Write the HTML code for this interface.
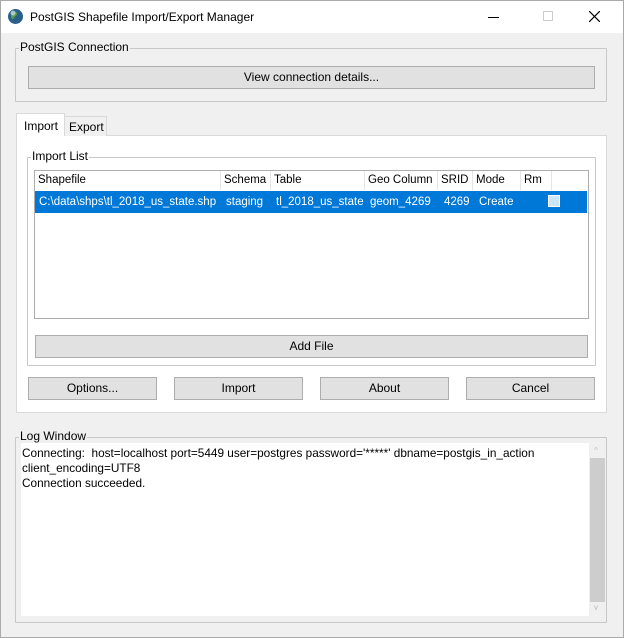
<!DOCTYPE html>
<html><head><style>
*{box-sizing:border-box;margin:0;padding:0}
body{width:624px;height:638px;background:#f0f0f0;font-family:"Liberation Sans",sans-serif;font-size:12px;color:#000;position:relative;overflow:hidden}
.a{position:absolute}
.win{left:0;top:0;width:624px;height:638px;border:1px solid #aaa}
.title{left:1px;top:1px;width:622px;height:32px;background:#fff}
.grp{border:1px solid #c8c8c8;border-radius:1px}
.lbl{background:#f0f0f0;padding:0 1px;line-height:13px}
.btn{background:#e1e1e1;border:1px solid #adadad;text-align:center;line-height:20px}
.hd{top:0;height:19px;line-height:19px;border-right:1px solid #e5e5e5;padding-left:3px;font-size:11.5px}
.cell{color:#fff;line-height:22px;font-size:11.5px}
</style></head><body>
<div class="a win"></div>
<div class="a title"></div>
<svg class="a" style="left:7px;top:8px" width="17" height="17" viewBox="0 0 17 17"><circle cx="8.5" cy="8.5" r="7.5" fill="#2a5f8a"/><path d="M4 5c2-2 5-2 6 0s-2 3-3 5-3 1-3-1z" fill="#5a9a4a"/><circle cx="6" cy="5" r="2.5" fill="#cfe3f0" opacity=".7"/></svg>
<div class="a" style="left:30px;top:10px;font-size:12px">PostGIS Shapefile Import/Export Manager</div>
<div class="a" style="left:488px;top:17px;width:11px;height:1px;background:#000"></div>
<div class="a" style="left:543px;top:11px;width:10px;height:10px;border:1px solid #ccc"></div>
<svg class="a" style="left:589px;top:11px" width="11" height="11"><path d="M0 0L11 11M11 0L0 11" stroke="#000" stroke-width="1.2"/></svg>

<div class="a grp" style="left:15px;top:48px;width:592px;height:54px"></div>
<div class="a lbl" style="left:19px;top:41px">PostGIS Connection</div>
<div class="a btn" style="left:28px;top:66px;width:567px;height:23px">View connection details...</div>

<div class="a" style="left:16px;top:135px;width:591px;height:278px;background:#fff;border:1px solid #d9d9d9"></div>
<div class="a" style="left:16px;top:113px;width:49px;height:23px;background:#fff;border:1px solid #d9d9d9;border-bottom:none;line-height:24px;padding-left:7px">Import</div>
<div class="a" style="left:64px;top:116px;width:43px;height:20px;background:#f0f0f0;border:1px solid #d9d9d9;border-bottom:none;line-height:21px;padding-left:4px">Export</div>

<div class="a grp" style="left:27px;top:157px;width:569px;height:209px"></div>
<div class="a lbl" style="left:31px;top:150px;background:#fff">Import List</div>
<div class="a" style="left:34px;top:170px;width:555px;height:149px;background:#fff;border:1px solid #adadad"></div>
<div class="a" style="left:35px;top:171px;width:553px;height:19px">
<div class="a hd" style="left:0;width:186px">Shapefile</div>
<div class="a hd" style="left:186px;width:50px">Schema</div>
<div class="a hd" style="left:236px;width:94px">Table</div>
<div class="a hd" style="left:330px;width:73px">Geo Column</div>
<div class="a hd" style="left:403px;width:35px">SRID</div>
<div class="a hd" style="left:438px;width:48px">Mode</div>
<div class="a hd" style="left:486px;width:31px">Rm</div>
</div>
<div class="a" style="left:35px;top:191px;width:552px;height:22px;background:#0078d7"></div>
<div class="a cell" style="left:39px;top:191px">C:\data\shps\tl_2018_us_state.shp</div>
<div class="a cell" style="left:226px;top:191px">staging</div>
<div class="a cell" style="left:276px;top:191px">tl_2018_us_state</div>
<div class="a cell" style="left:370px;top:191px">geom_4269</div>
<div class="a cell" style="left:444px;top:191px">4269</div>
<div class="a cell" style="left:479px;top:191px">Create</div>
<div class="a" style="left:548px;top:195px;width:12px;height:12px;background:#cce4f7;border:1px solid #fff"></div>
<div class="a btn" style="left:35px;top:335px;width:553px;height:23px">Add File</div>

<div class="a btn" style="left:28px;top:377px;width:129px;height:23px">Options...</div>
<div class="a btn" style="left:174px;top:377px;width:129px;height:23px">Import</div>
<div class="a btn" style="left:320px;top:377px;width:129px;height:23px">About</div>
<div class="a btn" style="left:466px;top:377px;width:129px;height:23px">Cancel</div>

<div class="a grp" style="left:15px;top:437px;width:592px;height:186px"></div>
<div class="a lbl" style="left:19px;top:430px">Log Window</div>
<div class="a" style="left:21px;top:443px;width:568px;height:173px;background:#fff"></div>
<div class="a" style="left:589px;top:443px;width:17px;height:173px;background:#f0f0f0"></div>
<div class="a" style="left:590px;top:458px;width:15px;height:144px;background:#cdcdcd"></div>
<div class="a" style="left:594px;top:446px;font-size:8px;color:#bbb">^</div>
<div class="a" style="left:594px;top:603px;font-size:8px;color:#bbb">v</div>
<div class="a" style="left:22px;top:446px;line-height:15px;font-size:11.8px">Connecting:&nbsp; host=localhost port=5449 user=postgres password='*****' dbname=postgis_in_action<br>client_encoding=UTF8<br>Connection succeeded.</div>
</body></html>
